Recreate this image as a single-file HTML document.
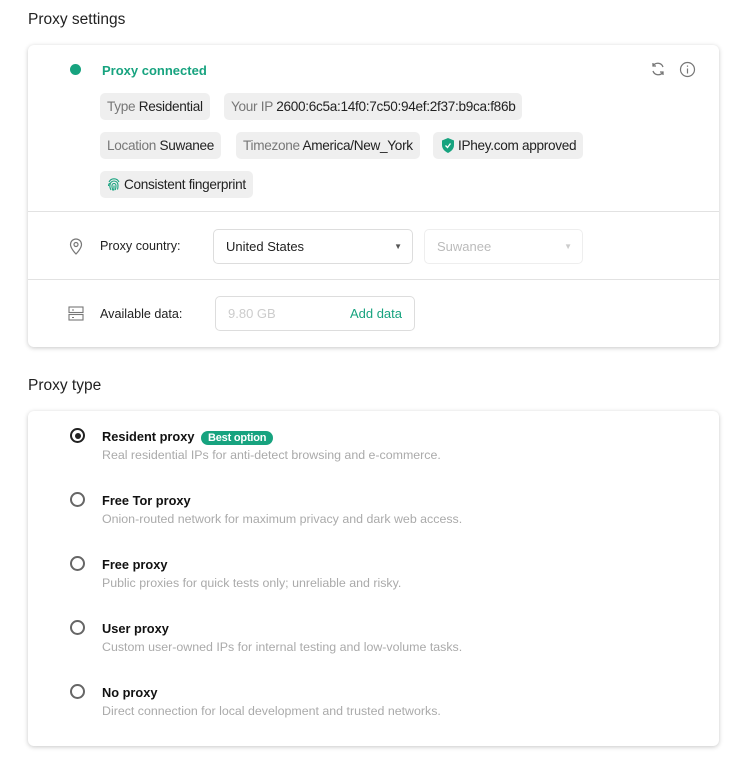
<!DOCTYPE html>
<html><head><meta charset="utf-8"><style>
*{box-sizing:border-box;margin:0;padding:0}
body{width:756px;height:768px;background:#fff;font-family:"Liberation Sans",sans-serif;color:#222;position:relative;overflow:hidden}
.h{position:absolute;left:28px;font-size:15.5px;color:#222}
.card{position:absolute;left:28px;width:691px;background:#fff;border-radius:6px;box-shadow:0 1px 5px rgba(0,0,0,.22)}
.a{position:absolute}
.chip{position:absolute;height:27px;line-height:27px;background:#efefef;border-radius:5px;padding:0 7px;font-size:13.6px;color:#222;white-space:nowrap;letter-spacing:-0.3px}
.chip span{color:#777}
.div{position:absolute;left:0;right:0;height:1px;background:#e2e2e2}
.lbl{position:absolute;font-size:12.6px;color:#222}
.sel{position:absolute;border:1px solid #ddd;border-radius:5px;font-size:13px;padding:0 12px}
.ti{position:absolute;left:74px;font-size:12.8px;font-weight:bold;color:#111}
.de{position:absolute;left:74px;font-size:12.4px;color:#aaa}
.r{position:absolute;left:42px;width:15px;height:15px;border-radius:50%;border:2px solid #666}
</style></head><body>
<div class="h" style="top:11px">Proxy settings</div>
<div class="card" style="top:45px;height:302px">
 <div class="a" style="left:42px;top:19px;width:11px;height:11px;border-radius:50%;background:#17a37f"></div>
 <div class="a" style="left:74px;top:18px;font-size:13px;font-weight:bold;color:#17a37f">Proxy connected</div>
 <svg class="a" style="left:622px;top:16px" width="16" height="16" viewBox="0 0 16 16" fill="none" stroke="#777" stroke-width="1.3"><path d="M13 6A5.5 5.5 0 0 0 3 5M3 2v3h3M3 10a5.5 5.5 0 0 0 10 1M13 14v-3h-3"/></svg>
 <svg class="a" style="left:651px;top:16px" width="17" height="17" viewBox="0 0 17 17" fill="none" stroke="#777" stroke-width="1.2"><circle cx="8.5" cy="8.5" r="7"/><path d="M8.5 7.5v5M8.5 4.5v1.2"/></svg>
 <div class="chip" style="left:72px;top:48px"><span>Type</span> Residential</div>
 <div class="chip" style="left:196px;top:48px"><span>Your IP</span> 2600:6c5a:14f0:7c50:94ef:2f37:b9ca:f86b</div>
 <div class="chip" style="left:72px;top:87px"><span>Location</span> Suwanee</div>
 <div class="chip" style="left:208px;top:87px"><span>Timezone</span> America/New_York</div>
 <div class="chip" style="left:405px;top:87px;padding-left:9px"><svg width="12" height="15" viewBox="0 0 12 15" style="vertical-align:-3px;margin-right:4px"><path d="M6 0L12 2.5V7c0 4-3 6.5-6 8C3 13.5 0 11 0 7V2.5z" fill="#17a37f"/><path d="M3.5 7.5l2 2 3-4" stroke="#fff" stroke-width="1.3" fill="none"/></svg>IPhey.com approved</div>
 <div class="chip" style="left:72px;top:126px"><svg width="14" height="14" viewBox="0 0 14 14" fill="none" stroke="#17a37f" stroke-width="1.1" style="vertical-align:-2px;margin-right:3px"><path d="M2 5a5.5 5.5 0 0 1 10 0M1.5 9a6 6 0 0 1 1-3M4 13c-1-2-1.5-3.5-1-5a4 4 0 0 1 8 0c0 1.5 0 3-.5 4.5M6 13.5c-.8-2-1.2-3.5-1-5a2 2 0 0 1 4 0c0 1.5-.2 3-.8 4.5M7 8.5c0 2 0 3.5-.3 5"/></svg>Consistent fingerprint</div>
 <div class="div" style="top:166px"></div>
 <svg class="a" style="left:41px;top:193px" width="14" height="17" viewBox="0 0 14 17" fill="none" stroke="#777" stroke-width="1.2"><path d="M7 16S1.5 10.5 1.5 6.5a5.5 5.5 0 0 1 11 0C12.5 10.5 7 16 7 16z"/><circle cx="7" cy="6.5" r="2"/></svg>
 <div class="lbl" style="left:72px;top:194px">Proxy country:</div>
 <div class="sel" style="left:185px;top:184px;width:200px;height:35px;line-height:33px;color:#222">United States<span style="position:absolute;right:10px;top:0;font-size:8px;color:#555">▼</span></div>
 <div class="sel" style="left:396px;top:184px;width:159px;height:35px;line-height:33px;color:#bbb;border-color:#eee">Suwanee<span style="position:absolute;right:10px;top:0;font-size:8px;color:#ccc">▼</span></div>
 <div class="div" style="top:234px"></div>
 <svg class="a" style="left:40px;top:261px" width="16" height="15" viewBox="0 0 16 15" fill="none" stroke="#777" stroke-width="1.1"><rect x="1" y="1" width="14" height="5.5"/><rect x="1" y="8.5" width="14" height="5.5"/><path d="M4 4h2M4 11.5h2"/></svg>
 <div class="lbl" style="left:72px;top:262px">Available data:</div>
 <div class="sel" style="left:187px;top:251px;width:200px;height:35px;line-height:33px;color:#ccc">9.80 GB<span style="position:absolute;right:12px;color:#17a37f">Add data</span></div>
</div>
<div class="h" style="top:377px">Proxy type</div>
<div class="card" style="top:411px;height:335px">
 <div class="r" style="top:17px;border-color:#222"><div style="position:absolute;left:2.5px;top:2.5px;width:6px;height:6px;border-radius:50%;background:#222"></div></div>
 <div class="ti" style="top:18px">Resident proxy <span style="display:inline-block;margin-left:3px;background:#17a37f;color:#fff;font-size:11px;border-radius:8px;padding:1px 7px;font-weight:bold;letter-spacing:-0.2px">Best option</span></div>
 <div class="de" style="top:37px">Real residential IPs for anti-detect browsing and e-commerce.</div>
 <div class="r" style="top:81px"></div><div class="ti" style="top:82px">Free Tor proxy</div><div class="de" style="top:101px">Onion-routed network for maximum privacy and dark web access.</div>
 <div class="r" style="top:145px"></div><div class="ti" style="top:146px">Free proxy</div><div class="de" style="top:165px">Public proxies for quick tests only; unreliable and risky.</div>
 <div class="r" style="top:209px"></div><div class="ti" style="top:210px">User proxy</div><div class="de" style="top:229px">Custom user-owned IPs for internal testing and low-volume tasks.</div>
 <div class="r" style="top:273px"></div><div class="ti" style="top:274px">No proxy</div><div class="de" style="top:293px">Direct connection for local development and trusted networks.</div>
</div>
</body></html>
